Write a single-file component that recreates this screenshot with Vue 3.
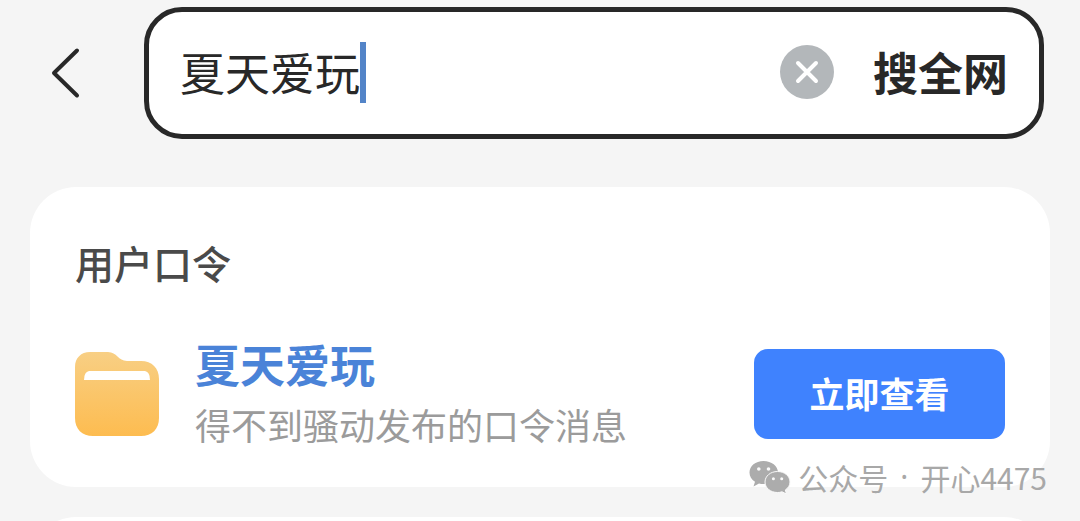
<script setup>
import { ref, computed } from 'vue'

const keyword = ref('夏天爱玩')
const fieldWidth = computed(() => `${Math.max(keyword.value.length, 1)}em`)
</script>

<template>
  <main class="page">
    <form class="topbar" @submit.prevent>
      <button class="back" type="button" aria-label="返回">
        <svg viewBox="0 0 32 54" width="32" height="54">
          <path d="M27 4.500 L4 27 L27 49.500" />
        </svg>
      </button>
      <div class="search">
        <input v-model="keyword" class="field" type="text" aria-label="搜索" :style="{ width: fieldWidth }" />
        <span class="caret"></span>
        <button class="clear" type="button" aria-label="清除" @click="keyword = ''">
          <svg viewBox="0 0 54 54" width="54" height="54">
            <circle cx="27" cy="27" r="27" />
            <path d="M18 18 L36 36 M36 18 L18 36" />
          </svg>
        </button>
        <button class="submit" type="submit">搜全网</button>
      </div>
    </form>

    <section class="card">
      <h2 class="heading">用户口令</h2>
      <div class="result">
        <svg class="folder" viewBox="0 0 84 84" width="84" height="84" aria-hidden="true">
          <defs>
            <linearGradient id="folder-fill" x1="0" y1="0" x2="0" y2="1">
              <stop offset="0" stop-color="#f8cf84" />
              <stop offset="1" stop-color="#fdbc50" />
            </linearGradient>
          </defs>
          <path
            d="M15 0 H33 C42 0 43 9 52 9 H66 C77 9 84 16 84 27 V66 C84 77 77 84 66 84 H18 C7 84 0 77 0 66 V15 C0 6 6 0 15 0 Z"
            fill="url(#folder-fill)"
          />
          <path d="M14 19 H70 Q75 20 75 28 H9 Q9 20 14 19 Z" fill="#fff" />
        </svg>
        <div class="info">
          <a class="name" href="#">夏天爱玩</a>
          <p class="desc">得不到骚动发布的口令消息</p>
        </div>
        <button class="view" type="button">立即查看</button>
      </div>
    </section>

    <section class="card next"></section>

    <div class="mark">
      <svg viewBox="0 0 42 34" width="42" height="34" aria-hidden="true">
        <path
          class="bubble"
          d="M14.500 1 C6.500 1 0.500 6 0.500 12.500 C0.500 16.500 2.500 19.500 6 21.700 L4.500 26.500 L10 23.500 C11.500 24 13 24 14.500 24 C22.500 24 29 19 29 12.500 C29 6 22.500 1 14.500 1 Z"
        />
        <path
          class="bubble front"
          d="M28.500 11.500 C21.500 11.500 16 16 16 22 C16 28 21.500 32.500 28.500 32.500 C30 32.500 31.500 32.300 33 31.800 L37.500 34 L36.300 30 C39.300 28 41 25.300 41 22 C41 16 35.500 11.500 28.500 11.500 Z"
        />
        <g class="eyes">
          <circle cx="9.800" cy="9" r="1.800" />
          <circle cx="19.500" cy="9" r="1.800" />
          <circle cx="24.400" cy="18.800" r="1.500" />
          <circle cx="32.700" cy="18.800" r="1.500" />
        </g>
      </svg>
      <span>公众号</span>
      <span class="dot">·</span>
      <span>开心4475</span>
    </div>
  </main>
</template>

<style>
body {
  margin: 0;
  background: #f5f5f5;
}
</style>

<style scoped>
.page {
  position: relative;
  box-sizing: border-box;
  height: 100vh;
  padding: 7px 30px 0;
  overflow: hidden;
  font-family: "Noto Sans CJK SC", sans-serif;
  background: #f5f5f5;
}

button,
input {
  padding: 0;
  border: 0;
  background: none;
  font-family: inherit;
}

button {
  cursor: pointer;
}

svg {
  display: block;
}

.topbar {
  display: flex;
  align-items: center;
  gap: 62px;
  padding: 0 6px 0 20px;
}

.back path {
  fill: none;
  stroke: #282828;
  stroke-width: 4;
  stroke-linecap: round;
  stroke-linejoin: round;
}

.search {
  display: flex;
  flex: 1;
  align-items: center;
  box-sizing: border-box;
  height: 132px;
  padding: 0 31px 2px;
  border: 5px solid #282828;
  border-radius: 38px;
  background: #fff;
}

.field {
  height: 64px;
  font-size: 45px;
  line-height: 64px;
  color: #282828;
  outline: none;
}

.caret {
  width: 6px;
  height: 61px;
  background: #5384c8;
}

.clear {
  margin-left: auto;
}

.clear circle {
  fill: #b3b7ba;
}

.clear path {
  fill: none;
  stroke: #fff;
  stroke-width: 4;
  stroke-linecap: round;
}

.submit {
  margin-left: 39px;
  font-size: 45px;
  font-weight: 700;
  line-height: 64px;
  color: #282828;
}

.card {
  box-sizing: border-box;
  height: 300px;
  margin-top: 48px;
  padding: 45px;
  border-radius: 46px;
  background: #fff;
}

.next {
  margin-top: 30px;
}

.heading {
  margin: 0;
  font-size: 39px;
  font-weight: 500;
  line-height: 60px;
  color: #4a4a4a;
}

.result {
  display: flex;
  align-items: center;
  margin-top: 42px;
}

.info {
  flex: 1;
  margin-left: 36px;
}

.name {
  display: block;
  font-size: 45px;
  font-weight: 700;
  line-height: 60px;
  color: #4a83d8;
  text-decoration: none;
}

.desc {
  margin: 0;
  font-size: 36px;
  line-height: 60px;
  color: #9b9b9b;
}

.view {
  width: 251px;
  height: 90px;
  padding-bottom: 4px;
  border-radius: 14px;
  background: #3f82fe;
  font-size: 35px;
  font-weight: 700;
  color: #fff;
}

.mark {
  position: absolute;
  right: 33px;
  bottom: 22px;
  display: flex;
  align-items: center;
  gap: 7px;
  font-size: 30px;
  line-height: 44px;
  color: #a8a8a8;
}

.dot {
  padding: 0 5px;
  font-family: "Noto Sans", sans-serif;
}

.bubble {
  fill: #acacac;
}

.front {
  stroke: #fafafa;
  stroke-width: 1;
}

.eyes {
  fill: #fafafa;
}
</style>
